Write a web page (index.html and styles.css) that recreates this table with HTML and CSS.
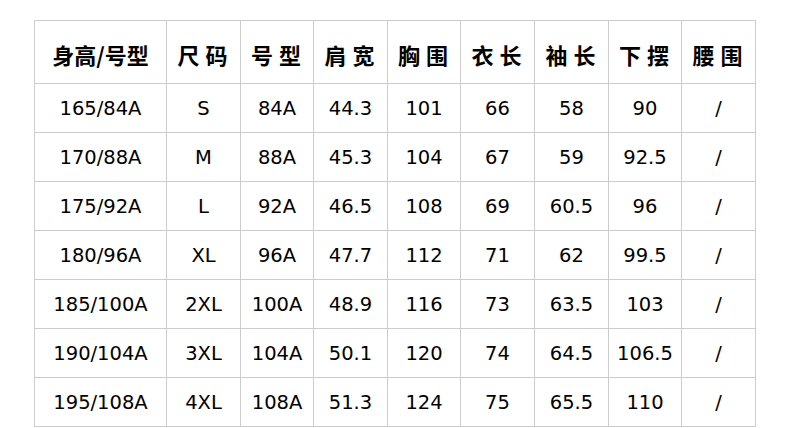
FILE: index.html
```html
<!DOCTYPE html>
<html lang="zh">
<head>
<meta charset="utf-8">
<link rel="stylesheet" href="styles.css">
</head>
<body>
<table class="size-table">
  <colgroup>
    <col class="c-first">
    <col class="c74"><col class="c73"><col class="c74"><col class="c73">
    <col class="c74"><col class="c74"><col class="c73"><col class="c74">
  </colgroup>
  <thead>
    <tr class="head">
      <th class="th-first">身高/号型</th><th>尺码</th><th>号型</th><th>肩宽</th><th>胸围</th><th>衣长</th><th>袖长</th><th>下摆</th><th>腰围</th>
    </tr>
  </thead>
  <tbody>
    <tr><td>165/84A</td><td>S</td><td>84A</td><td>44.3</td><td>101</td><td>66</td><td>58</td><td>90</td><td>/</td></tr>
    <tr><td>170/88A</td><td>M</td><td>88A</td><td>45.3</td><td>104</td><td>67</td><td>59</td><td>92.5</td><td>/</td></tr>
    <tr><td>175/92A</td><td>L</td><td>92A</td><td>46.5</td><td>108</td><td>69</td><td>60.5</td><td>96</td><td>/</td></tr>
    <tr><td>180/96A</td><td>XL</td><td>96A</td><td>47.7</td><td>112</td><td>71</td><td>62</td><td>99.5</td><td>/</td></tr>
    <tr><td>185/100A</td><td>2XL</td><td>100A</td><td>48.9</td><td>116</td><td>73</td><td>63.5</td><td>103</td><td>/</td></tr>
    <tr><td>190/104A</td><td>3XL</td><td>104A</td><td>50.1</td><td>120</td><td>74</td><td>64.5</td><td>106.5</td><td>/</td></tr>
    <tr><td>195/108A</td><td>4XL</td><td>108A</td><td>51.3</td><td>124</td><td>75</td><td>65.5</td><td>110</td><td>/</td></tr>
  </tbody>
</table>
</body>
</html>
```
FILE: styles.css
```css
html, body {
  margin: 0;
  padding: 0;
  background: #ffffff;
}
body {
  padding: 20px 0 0 34px;
  font-family: "DejaVu Sans", "Noto Sans CJK SC", sans-serif;
  color: #000000;
}
.size-table {
  border-collapse: separate;
  border-spacing: 0;
  table-layout: fixed;
  width: 722px;
  border-top: 1px solid #cccccc;
  border-left: 1px solid #cccccc;
}
.c-first { width: 132px; }
.c74 { width: 74px; }
.c73 { width: 73px; }
.size-table th,
.size-table td {
  padding: 0;
  text-align: center;
  border-right: 1px solid #cccccc;
  border-bottom: 1px solid #cccccc;
  white-space: nowrap;
}
.size-table th {
  height: 63px;
  font-family: "Noto Sans CJK SC", sans-serif;
  font-weight: 700;
  font-size: 22px;
  letter-spacing: 6px;
  padding-top: 4px;
  padding-left: 4px;
  box-sizing: border-box;
}
.size-table th.th-first {
  letter-spacing: 0;
  padding-left: 0;
}
.size-table td {
  height: 48px;
  font-size: 19.5px;
  font-weight: 400;
}
```
